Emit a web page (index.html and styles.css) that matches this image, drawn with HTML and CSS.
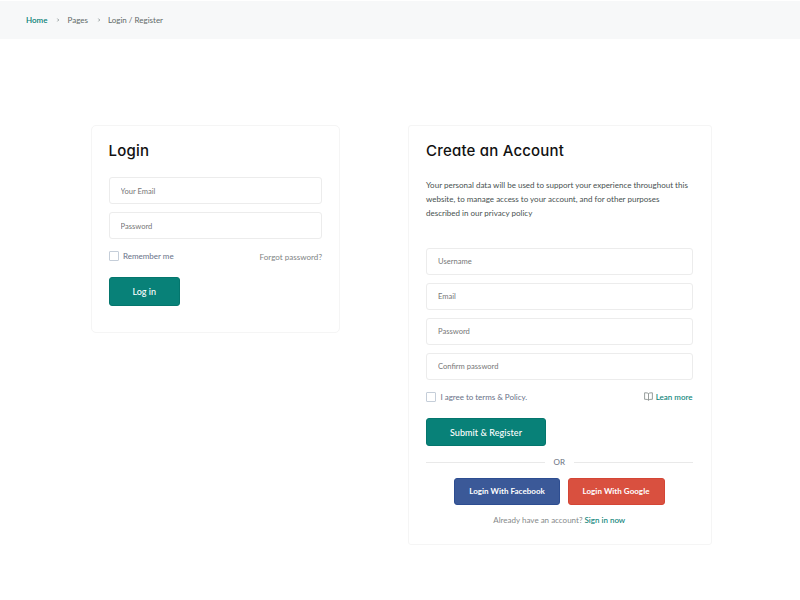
FILE: index.html
```html
<!DOCTYPE html>
<html lang="en">
<head>
<meta charset="utf-8">
<title>Login / Register</title>
<link rel="stylesheet" href="styles.css">
</head>
<body>
<nav class="breadcrumb">
  <a class="home">Home</a><svg class="chev" viewBox="0 0 4 6"><path d="M1.4 1.6 2.7 3 1.4 4.4"/></svg><span>Pages</span><svg class="chev" viewBox="0 0 4 6"><path d="M1.4 1.6 2.7 3 1.4 4.4"/></svg><span>Login / Register</span>
</nav>
<main class="forms">
  <form class="card login">
    <h1>Login</h1>
    <div class="fields">
      <input type="text" placeholder="Your Email">
      <input type="password" placeholder="Password">
    </div>
    <div class="options">
      <label class="check"><i class="box"></i><span class="remember">Remember me</span></label>
      <a class="forgot">Forgot password?</a>
    </div>
    <button type="button" class="btn log">Log in</button>
  </form>
  <form class="card register">
    <h1 class="create">Create an Account</h1>
    <p class="intro">Your personal data will be used to support your experience throughout this<br>website, to manage access to your account, and for other purposes<br>described in our privacy policy</p>
    <div class="fields">
      <input type="text" placeholder="Username">
      <input type="text" placeholder="Email">
      <input type="password" placeholder="Password">
      <input type="password" placeholder="Confirm password">
    </div>
    <div class="options">
      <label class="check"><i class="box"></i><span class="agree">I agree to terms &amp; Policy.</span></label>
      <a class="learn"><svg class="book" viewBox="0 0 9 9"><path d="M4.5 1.6C3.8 1 2.8.8.6.8v6.5c2 0 3.2.1 3.9.9.7-.8 1.9-.9 3.9-.9V.8c-2.2 0-3.2.2-3.9.8v6.6"/></svg><span>Lean more</span></a>
    </div>
    <button type="button" class="btn submit">Submit &amp; Register</button>
    <div class="divider"><span>OR</span></div>
    <div class="social">
      <button type="button" class="facebook">Login With Facebook</button>
      <button type="button" class="google">Login With Google</button>
    </div>
    <p class="already">Already have an account? <a>Sign in now</a></p>
  </form>
</main>
</body>
</html>
```
FILE: styles.css
```css
* { box-sizing: border-box; }
body {
  margin: 0;
  background: #fff;
  font-family: Lato, "Liberation Sans", sans-serif;
  font-size: 8px;
  color: #687188;
}
.breadcrumb {
  display: flex;
  align-items: center;
  height: 38px;
  margin-top: 1px;
  padding-left: 26px;
  background: #f7f8f9;
  color: #5f6a68;
  line-height: 10px;
}
.home { color: #087f76; font-weight: 600; }
.chev { width: 4px; height: 6px; margin: 0 7px 0 9px; }
.chev path { fill: none; stroke: #8a9494; stroke-width: .9; }
.forms {
  display: flex;
  align-items: flex-start;
  gap: 68px;
  padding: 86px 0 0 90.5px;
}
.card { border: 1px solid #f5f5f5; background: #fff; padding: 15px 17px 0; }
.login { width: 249.5px; height: 208px; border-radius: 5px; }
.register { width: 303.5px; height: 420px; padding-right: 18px; border-radius: 3px; }
h1 {
  margin: 0;
  font: 500 15px/20px Inter, Lato, sans-serif;
  font-feature-settings: "cv11" 1;
  letter-spacing: .24px;
  color: #111;
}
.create { letter-spacing: .2px; }
.fields { display: grid; gap: 8.2px; margin-top: 16px; }
.intro {
  margin: 17px 0 0;
  line-height: 14px;
  color: #47514f;
  letter-spacing: .005px;
  white-space: nowrap;
}
.register .fields { margin-top: 27.5px; }
input {
  width: 100%;
  height: 27px;
  padding: 0 11px;
  border: 1px solid #ececec;
  border-radius: 3px;
  background: #fff;
  font: 7.6px Lato, "Liberation Sans", sans-serif;
  color: #333;
}
.register input { padding-bottom: .5px; }
input::placeholder { color: #777; opacity: 1; }
.options {
  display: flex;
  justify-content: space-between;
  align-items: center;
  height: 12px;
  margin-top: 11px;
}
.register .options { margin-top: 10.8px; }
.check { display: flex; align-items: center; gap: 4.5px; }
.box { width: 10px; height: 10px; border: 1px solid #c5ced9; border-radius: 1px; }
.agree { letter-spacing: -.03px; }
.forgot { color: #808484; position: relative; top: .5px; letter-spacing: .03px; }
.learn { display: flex; align-items: center; gap: 3px; color: #087f76; font-weight: 500; }
.learn span { padding-top: 1px; }
.book { width: 9px; height: 9px; }
.book path { fill: none; stroke: #7d8583; stroke-width: .8; }
button { display: block; border: 0; border-radius: 3px; padding: 0; font-family: Lato, sans-serif; color: #fff; }
.btn {
  height: 28.5px;
  margin-top: 15px;
  background: #088178;
  border: 1px solid #04766d;
  font-size: 9px;
  font-weight: 500;
}
.log { width: 71.5px; }
.submit { width: 120px; letter-spacing: .06px; }
.divider {
  display: flex;
  align-items: center;
  gap: 9px;
  margin-top: 10.5px;
  height: 11px;
  color: #6b7280;
}
.divider::before, .divider::after { content: ""; flex: 1; height: 1px; background: #e9e9e9; }
.social { display: flex; justify-content: center; gap: 7.5px; margin-top: 10px; }
.social button { height: 27px; font-size: 8px; font-weight: 700; letter-spacing: .03px; }
.facebook { width: 106px; background: #3b5998; border: 1px solid #2d4d91; }
.google { width: 97px; background: #d9503f; border: 1px solid #d44535; }
.already { margin: 9px 0 0; line-height: 12px; text-align: center; color: #858989; }
.already a { color: #087f76; font-weight: 500; }
```
